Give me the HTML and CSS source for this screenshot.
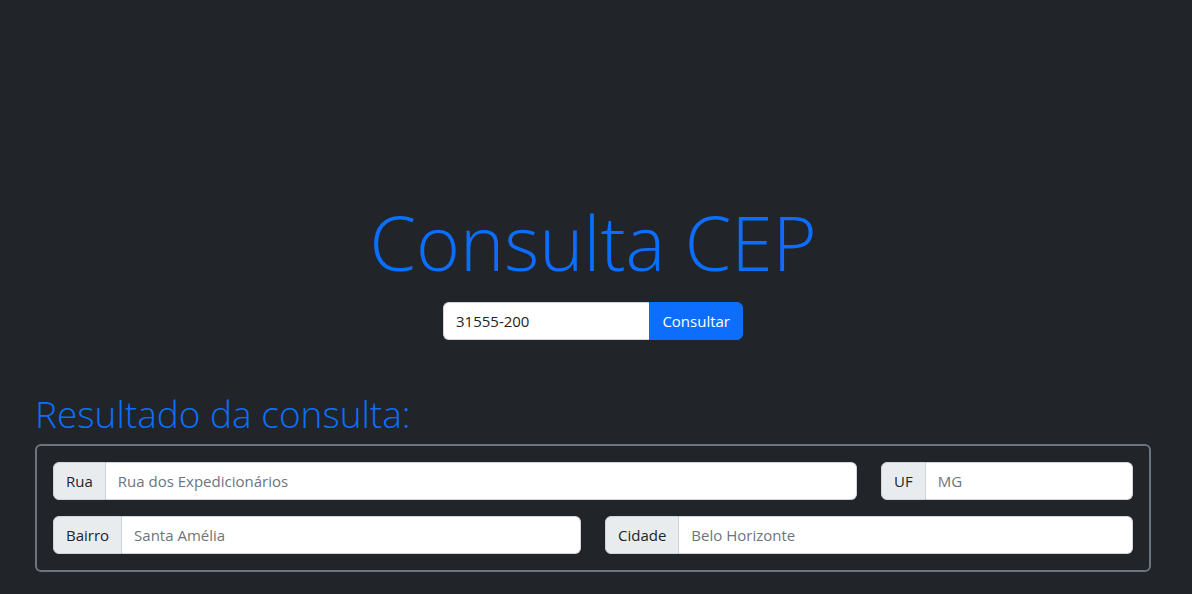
FILE: index.html
```html
<!DOCTYPE html>
<html lang="pt-BR">
<head>
<meta charset="utf-8">
<meta name="viewport" content="width=device-width, initial-scale=1">
<title>Consulta CEP</title>
<link rel="stylesheet" href="styles.css">
</head>
<body>
<main class="page">
  <section class="search">
    <h1 class="title">Consulta CEP</h1>
    <form class="group search-form">
      <input class="field" type="text" value="31555-200" aria-label="CEP">
      <button class="button" type="button">Consultar</button>
    </form>
  </section>
  <section class="result">
    <h2 class="subtitle">Resultado da consulta:</h2>
    <div class="panel">
      <div class="row row-street">
        <div class="group"><label class="tag" for="rua">Rua</label><input class="field" id="rua" type="text" placeholder="Rua dos Expedicionários"></div>
        <div class="group"><label class="tag" for="uf">UF</label><input class="field" id="uf" type="text" placeholder="MG"></div>
      </div>
      <div class="row">
        <div class="group"><label class="tag" for="bairro">Bairro</label><input class="field" id="bairro" type="text" placeholder="Santa Amélia"></div>
        <div class="group"><label class="tag" for="cidade">Cidade</label><input class="field" id="cidade" type="text" placeholder="Belo Horizonte"></div>
      </div>
    </div>
  </section>
</main>
</body>
</html>
```
FILE: styles.css
```css
* { box-sizing: border-box; }
body {
  margin: 0;
  background: #212529;
  color: #212529;
  font-family: "Segoe UI", "Open Sans", "Noto Sans", sans-serif;
  font-size: 15px;
  line-height: 24px;
}
.page { padding: 194px 41px 22px 35px; }
.search { display: flex; flex-direction: column; align-items: center; }
.title, .subtitle { margin: 0; color: #0d6efd; font-weight: 300; }
.title { margin-bottom: 12px; font-size: 75px; line-height: 96px; }
.search-form { width: 300px; }
.result { margin-top: 50px; }
.subtitle { margin-bottom: 6px; font-size: 37px; line-height: 48px; }
.panel {
  display: grid;
  gap: 16px;
  padding: 16px;
  border: 2px solid #6c757d;
  border-radius: 6px;
}
.row { display: grid; grid-template-columns: 1fr 1fr; gap: 24px; }
.row-street { grid-template-columns: minmax(0, 804fr) minmax(0, 252fr); }
.group {
  display: flex;
  height: 38px;
  min-width: 0;
  border-radius: 6px;
}
.tag, .field, .button {
  padding: 6px 12px;
  border: 1px solid #ced4da;
  font: inherit;
}
.tag {
  background: #e9ecef;
  border-radius: 6px 0 0 6px;
  white-space: nowrap;
}
.field {
  flex: 1;
  width: 0;
  min-width: 0;
  background: #fff;
  color: #212529;
  border-radius: 0 6px 6px 0;
}
.tag + .field { border-left: 0; }
.search-form .field { border-right: 0; border-radius: 6px 0 0 6px; }
.field::placeholder { color: #6c757d; opacity: 1; }
.button {
  background: #0d6efd;
  border-color: #0d6efd;
  color: #fff;
  border-radius: 0 6px 6px 0;
}
```
